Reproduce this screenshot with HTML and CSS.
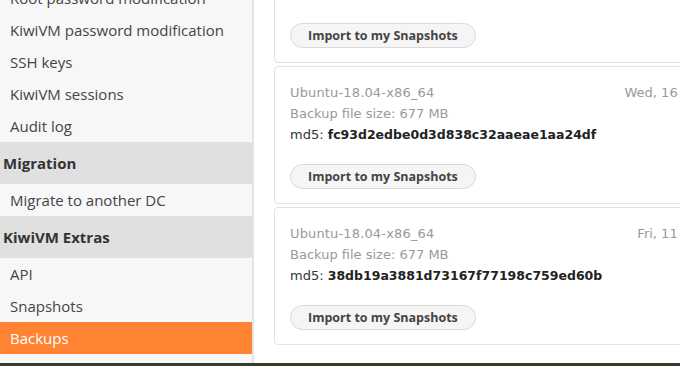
FILE: index.html
```html
<!DOCTYPE html>
<html lang="en">
<head>
    <meta charset="UTF-8">
    <meta name="viewport" content="width=device-width, initial-scale=1.0">
    <title>KiwiVM - Backups</title>
    <link rel="stylesheet" href="styles.css">
</head>
<body>
    <div class="layout">
        <!-- Menu lateral -->
        <aside class="sidebar">
            <ul class="nav">
                <li class="nav-item">Root password modification</li>
                <li class="nav-item">KiwiVM password modification</li>
                <li class="nav-item">SSH keys</li>
                <li class="nav-item">KiwiVM sessions</li>
                <li class="nav-item">Audit log</li>
                <li class="nav-head">Migration</li>
                <li class="nav-item">Migrate to another DC</li>
                <li class="nav-head">KiwiVM Extras</li>
                <li class="nav-item">API</li>
                <li class="nav-item">Snapshots</li>
                <li class="nav-item active">Backups</li>
            </ul>
        </aside>

        <!-- Lista de backups -->
        <main class="content">
            <div class="cards">
                <div class="card">
                    <div class="card-top">
                        <span class="os">Ubuntu-18.04-x86_64</span>
                        <span class="date">Mon, 21 Oct 2019 04:12:33</span>
                    </div>
                    <div class="size">Backup file size: 677 MB</div>
                    <div class="md5">md5: <b>a41c2f0be8d67d1e5b9a02c7e3f14d90</b></div>
                    <button class="import-btn">Import to my Snapshots</button>
                </div>
                <div class="card">
                    <div class="card-top">
                        <span class="os">Ubuntu-18.04-x86_64</span>
                        <span class="date">Wed, 16 Oct 2019 04:12:33</span>
                    </div>
                    <div class="size">Backup file size: 677 MB</div>
                    <div class="md5">md5: <b>fc93d2edbe0d3d838c32aaeae1aa24df</b></div>
                    <button class="import-btn">Import to my Snapshots</button>
                </div>
                <div class="card">
                    <div class="card-top">
                        <span class="os">Ubuntu-18.04-x86_64</span>
                        <span class="date">Fri, 11 Oct 2019 04:12:33</span>
                    </div>
                    <div class="size">Backup file size: 677 MB</div>
                    <div class="md5">md5: <b>38db19a3881d73167f77198c759ed60b</b></div>
                    <button class="import-btn">Import to my Snapshots</button>
                </div>
            </div>
        </main>
    </div>
    <div class="bottom-bar"></div>
</body>
</html>
```

FILE: styles.css
```css
/* General */
body {
    margin: 0;
    height: 366px;
    overflow: hidden;
    background-color: #fff;
    font-family: "Open Sans", "Noto Sans", sans-serif;
    color: #444;
}
.layout {
    display: flex;
    height: 363px;
}
.bottom-bar {
    height: 3px;
    background-color: #353d2d;
}

/* Sidebar */
.sidebar {
    width: 252px;
    flex-shrink: 0;
    background-color: #f7f7f7;
    border-right: 2px solid #e3e3e3;
    overflow: hidden;
}
.nav {
    list-style: none;
    margin: -18px 0 0 0;
    padding: 0;
}
.nav-item {
    height: 32px;
    line-height: 33px;
    padding-left: 10px;
    font-size: 15px;
    color: #454545;
    white-space: nowrap;
}
.nav-item.active {
    background-color: #ff8332;
    color: #fff;
}
.nav-head {
    height: 42px;
    line-height: 43px;
    padding-left: 3px;
    background-color: #e0e0e0;
    font-size: 15px;
    font-weight: bold;
    color: #333;
}

/* Content */
.content {
    flex: 1;
    padding-left: 20px;
    overflow: hidden;
}
.cards {
    width: 546px;
    margin-top: -75px;
}
.card {
    border: 1px solid #e2e2e2;
    border-radius: 4px;
    padding: 15px 15px 14px 15px;
    margin-bottom: 3px;
    font-family: "DejaVu Sans", Verdana, sans-serif;
    font-size: 13px;
    line-height: 21px;
    color: #999;
}
.card-top {
    display: flex;
    justify-content: space-between;
    white-space: nowrap;
}
.os {
    letter-spacing: 0.15px;
}
.md5 {
    color: #333;
}
.md5 b {
    color: #222;
    font-size: 12.5px;
}
.import-btn {
    display: block;
    margin-top: 19px;
    height: 25px;
    padding: 0 17px;
    border: 1px solid #d9d9d9;
    border-radius: 13px;
    background-color: #f5f5f5;
    font-family: "Open Sans", "Noto Sans", sans-serif;
    font-size: 12.5px;
    font-weight: bold;
    color: #444;
    cursor: pointer;
}
```
